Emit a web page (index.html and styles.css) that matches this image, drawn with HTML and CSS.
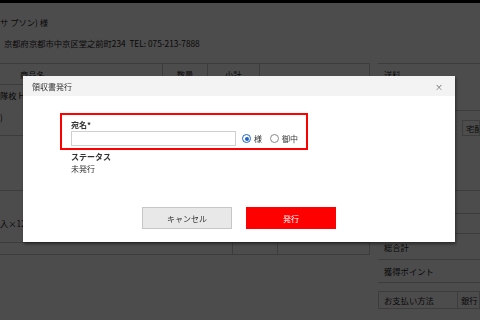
FILE: index.html
```html
<!DOCTYPE html>
<html lang="ja">
<head>
<meta charset="utf-8">
<title>領収書発行</title>
<link rel="stylesheet" href="styles.css">
</head>
<body>
<div class="page">
  <div class="topbar"></div>
  <div class="name">サ プソン) 様</div>
  <div class="addr">京都府京都市中京区堂之前町234&nbsp; TEL: 075-213-7888</div>
  <div class="content">
    <div class="items">
      <div class="row head">
        <div class="c c1">商品名</div><div class="c c2">数量</div><div class="c c3">小計</div><div class="c c4"></div>
      </div>
      <div class="row r1">
        <div class="c c1 lines"><span>隊枚 HI</span><span>)</span></div><div class="c c2"></div><div class="c c3"></div><div class="c c4"></div>
      </div>
      <div class="row r2">
        <div class="c c1"></div><div class="c c2"></div><div class="c c3"></div><div class="c c4"></div>
      </div>
      <div class="row r3">
        <div class="c c1 low">入×12</div><div class="c c2"></div><div class="c c3"></div><div class="c c4"></div>
      </div>
      <div class="row r4">
        <div class="c d1"></div><div class="c d2"></div><div class="c d3"></div>
      </div>
    </div>
    <div class="side">
      <div class="srow s1">送料</div>
      <div class="srow s2"><div class="ship">宅配</div></div>
      <div class="srow s3"></div>
      <div class="srow s4"></div>
      <div class="srow s5">総合計</div>
      <div class="srow s6">獲得ポイント</div>
      <div class="pay"><div class="pk">お支払い方法</div><div class="pv">銀行</div></div>
    </div>
  </div>
</div>
<div class="overlay"></div>
<div class="modal">
  <div class="mhead"><span class="mtitle">領収書発行</span><span class="close">×</span></div>
  <div class="mbody">
    <div class="field">
      <div class="label">宛名*</div>
      <div class="inrow">
        <div class="input"></div>
        <span class="radio on"></span><span class="rl">様</span>
        <span class="radio"></span><span class="rl">御中</span>
      </div>
    </div>
    <div class="status">
      <div class="label">ステータス</div>
      <div class="val">未発行</div>
    </div>
    <div class="btns">
      <div class="btn cancel">キャンセル</div>
      <div class="btn issue">発行</div>
    </div>
  </div>
</div>
</body>
</html>
```
FILE: styles.css
```css
* { box-sizing: border-box; }
html, body { margin: 0; padding: 0; }
body {
  width: 480px;
  height: 320px;
  overflow: hidden;
  background: #fff;
  font-family: "Noto Sans CJK JP", "Noto Sans", sans-serif;
  font-size: 8px;
  color: #333;
}
.page { color: #222; font-size: 8.3px; }
.topbar { height: 3px; background: #000; }
.name { padding-top: 13px; line-height: 12px; }
.addr { margin-top: 9px; padding-left: 4px; line-height: 12px; }
.content { display: flex; margin-top: 14px; }
.items { width: 370px; border-top: 1px solid #c8c8c8; }
.row { display: flex; border-bottom: 1px solid #c8c8c8; }
.c { border-right: 1px solid #c8c8c8; }
.c1 { width: 163px; }
.c2 { width: 45px; }
.c3 { width: 52px; }
.c4 { width: 110px; }
.head { height: 21px; align-items: stretch; }
.head .c { display: flex; align-items: center; justify-content: center; }
.head .c1 { justify-content: flex-start; padding-left: 20px; }
.head .c3 { justify-content: flex-start; padding-left: 17px; }
.r1 { height: 51px; }
.lines { display: flex; flex-direction: column; padding-top: 4px; line-height: 12px; gap: 10px; }
.r2 { height: 55px; }
.r3 { height: 52px; }
.low { padding-top: 26px; line-height: 12px; }
.r4 { height: 12px; }
.d1 { width: 233px; }
.d2 { width: 45px; }
.d3 { width: 92px; }
.side { width: 102px; margin-left: 8px; border-top: 1px solid #c8c8c8; }
.srow { border-bottom: 1px solid #c8c8c8; padding-left: 6px; line-height: 12px; }
.s1 { height: 47px; padding-top: 4px; }
.s2 { height: 80px; padding-top: 9px; padding-left: 84px; }
.ship { height: 16px; border: 1px solid #c8c8c8; padding-left: 3px; line-height: 14px; white-space: nowrap; overflow: hidden; }
.s3 { height: 23px; }
.s4 { height: 20px; }
.s5 { height: 26px; display: flex; align-items: center; }
.s6 { height: 23px; display: flex; align-items: center; }
.pay { margin-top: 8px; height: 18px; border: 1px solid #c8c8c8; display: flex; line-height: 16px; white-space: nowrap; }
.pk { width: 79px; padding-left: 5px; border-right: 1px solid #c8c8c8; }
.pv { padding-left: 3px; }

.overlay { position: fixed; inset: 0; background: rgba(0, 0, 0, 0.7); }
.modal {
  position: fixed;
  left: 23px;
  top: 76px;
  width: 432px;
  height: 166px;
  background: #fff;
  box-shadow: 1px 2px 3px rgba(0, 0, 0, 0.45);
  color: #333;
}
.mhead {
  height: 20px;
  background: #f3f3f3;
  display: flex;
  align-items: center;
  justify-content: space-between;
  padding: 0 12px 0 9px;
}
.mtitle { font-size: 8px; }
.close { font-size: 8px; color: #666; }
.mbody { display: flex; flex-direction: column; padding-top: 17px; }
.field {
  margin-left: 37px;
  width: 248px;
  height: 37px;
  border: 2px solid #f00;
  padding: 4px 0 0 9px;
}
.label { font-weight: bold; line-height: 11px; }
.inrow { display: flex; align-items: center; margin-top: 1px; white-space: nowrap; }
.input { width: 165px; height: 15px; border: 1px solid #cfcfcf; background: #fff; flex-shrink: 0; }
.radio {
  width: 9px; height: 9px; border-radius: 50%;
  border: 1px solid #8a8a8a; background: #fff;
  margin-left: 6px; position: relative; flex-shrink: 0;
}
.radio.on { border-color: #1e64c8; }
.radio.on::after {
  content: ""; position: absolute; left: 1.5px; top: 1.5px;
  width: 4px; height: 4px; border-radius: 50%; background: #1e64c8;
}
.rl { margin-left: 3px; line-height: 12px; flex-shrink: 0; }
.rl + .radio { margin-left: 8px; }
.status { margin-left: 48px; margin-top: 1px; line-height: 12px; }
.status .label { line-height: 12px; }
.btns { display: flex; justify-content: center; gap: 14px; margin-top: 32px; }
.btn { width: 90px; height: 22px; display: flex; align-items: center; justify-content: center; font-size: 8px; }
.cancel { background: #e8e8e8; border: 1px solid #c6c6c6; color: #333; }
.issue { background: #ff0000; color: #fff; }
```
